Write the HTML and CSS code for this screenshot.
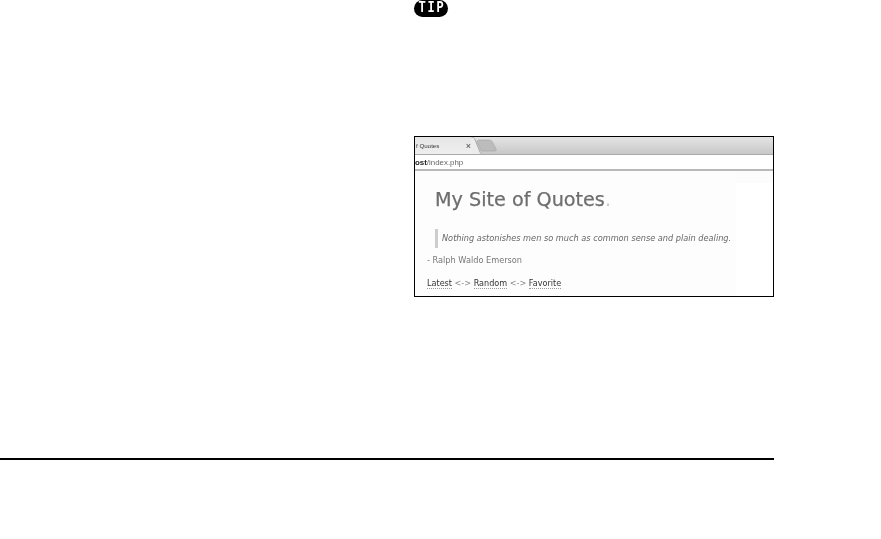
FILE: index.html
```html
<!DOCTYPE html>
<html lang="en">
<head>
<meta charset="utf-8">
<title>My Site of Quotes</title>
<link rel="stylesheet" href="styles.css">
</head>
<body>
<main class="page">
  <section class="column">
    <div class="tip"><span class="tip-text">TIP</span></div>
    <figure class="shot">
      <div class="shot-inner">
        <div class="tabbar">
          <div class="tab"><span class="tab-title">f Quotes</span><span class="tab-close">×</span></div>
          <svg class="tab-edge" width="26" height="17" viewBox="0 0 26 17" aria-hidden="true">
            <path d="M0 0H1C3 0 4 2 5 5L9 15C9.500 16 10 17 11 17H0Z" fill="#ececec" stroke="none"/>
            <path d="M0 0H1C3 0 4 2 5 5L9 15C9.500 16 10 17 11 17" fill="none" stroke="#a8a8a8"/>
            <path d="M6 5C6 4 6.500 3 8 3H18C20 3 21 4 22 6L25 12C25.500 13 25 14 24 14H11C10 14 10 13 9.500 12Z" fill="#bcbcbc" stroke="#a8a8a8" stroke-width=".7"/>
          </svg>
        </div>
        <div class="address"><b>ost</b>/index.php</div>
        <div class="content">
          <div class="sheet">
            <h1 class="site-title">My Site of Quotes<span class="dot">.</span></h1>
            <blockquote class="quote">Nothing astonishes men so much as common sense and plain dealing.</blockquote>
            <p class="author">- Ralph Waldo Emerson</p>
            <nav class="links"><a>Latest</a> &lt;-&gt; <a>Random</a> &lt;-&gt; <a>Favorite</a></nav>
          </div>
        </div>
      </div>
    </figure>
  </section>
  <hr class="rule">
</main>
</body>
</html>
```
FILE: styles.css
```css
html, body {
  margin: 0;
  padding: 0;
  background: #fff;
}
body {
  width: 881px;
  height: 539px;
  overflow: hidden;
  font-family: "Liberation Sans", Arial, sans-serif;
}
.page {
  width: 774px;
  display: flex;
  flex-direction: column;
}
.column {
  margin-left: 414px;
  width: 360px;
  display: flex;
  flex-direction: column;
  height: 458px;
}
.tip {
  width: 34px;
  height: 17px;
  border-radius: 9px;
  background: #000;
  color: #fff;
  font: bold 12px/17px "Liberation Mono", monospace;
  letter-spacing: 1.800px;
  text-align: center;
}
.tip-text {
  display: inline-block;
  margin-left: 2px;
  transform: scaleY(1.3);
}
.shot {
  margin: 119px 0 0;
  height: 161px;
  box-sizing: border-box;
  border: 1px solid #000;
  background: #fff;
  overflow: hidden;
}
.shot-inner {
  height: 100%;
  display: flex;
  flex-direction: column;
  filter: blur(.35px);
}
.tabbar {
  height: 17px;
  flex: none;
  display: flex;
  background: linear-gradient(#e4e4e4, #c8c8c8);
  border-bottom: 1px solid #a9a9a9;
}
.tab {
  width: 56px;
  height: 17px;
  background: linear-gradient(#e6e6e6, #eeeeee);
  display: flex;
  justify-content: space-between;
  align-items: center;
  color: #333;
  font-size: 6.200px;
}
.tab-title {
  margin-left: 1px;
}
.tab-close {
  font-size: 9px;
  color: #444;
}
.tab-edge {
  flex: none;
}
.address {
  height: 14px;
  flex: none;
  border-bottom: 2px solid #b8b8b8;
  background: #fff;
  font-size: 7.900px;
  line-height: 15px;
  color: #666;
  white-space: nowrap;
}
.address b {
  color: #222;
  font-weight: bold;
}
.content {
  flex: 1;
  background: linear-gradient(#fcfcfc 12px, #fff 12px);
}
.sheet {
  width: 321px;
  height: 100%;
  box-sizing: border-box;
  background: #fdfdfd;
  padding: 16px 0 0 12px;
  font-family: "DejaVu Sans", sans-serif;
  color: #666;
}
.site-title {
  margin: 0 0 0 8px;
  font-size: 19.200px;
  line-height: 26px;
  font-weight: normal;
  color: #6e6e6e;
  -webkit-text-stroke: .25px #6e6e6e;
  white-space: nowrap;
}
.dot {
  color: #c8c8c8;
  -webkit-text-stroke: 0;
}
.quote {
  margin: 16px 0 0 8px;
  border-left: 3px solid #cdcdcd;
  padding-left: 4px;
  height: 19px;
  font-size: 8.200px;
  line-height: 19px;
  font-style: italic;
  color: #666;
  white-space: nowrap;
}
.author {
  margin: 6px 0 0;
  font-size: 8.200px;
  line-height: 13px;
  color: #777;
}
.links {
  margin-top: 10px;
  font-size: 8.100px;
  line-height: 13px;
  color: #888;
}
.links a {
  color: #333;
  border-bottom: 1px dotted #999;
}
.rule {
  margin: 0;
  height: 2px;
  border: 0;
  background: #000;
}
```
